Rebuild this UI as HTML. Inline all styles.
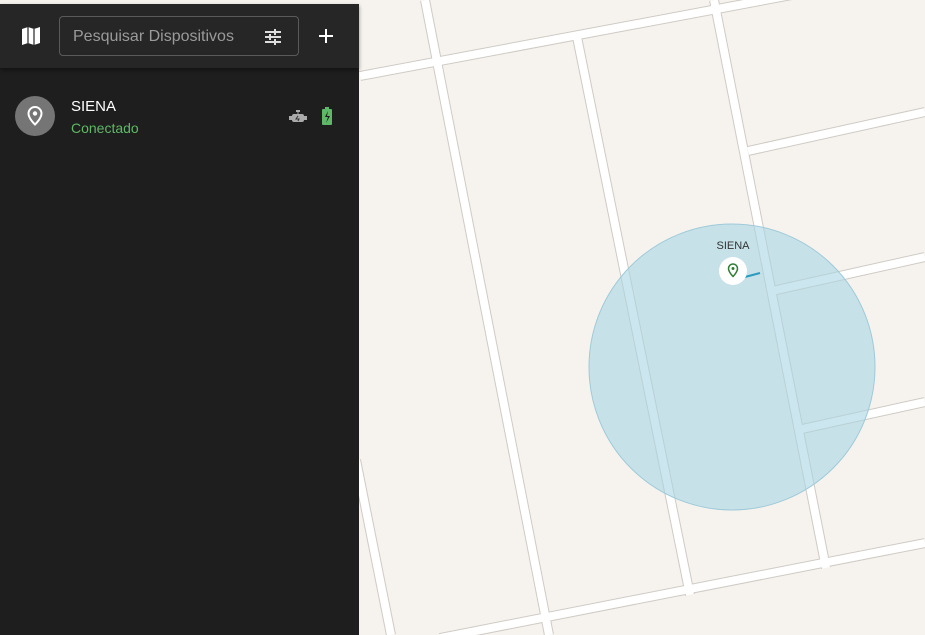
<!DOCTYPE html>
<html><head><meta charset="utf-8"><style>
body{margin:0;width:925px;height:635px;overflow:hidden;background:#f6f3ef;font-family:"Liberation Sans",sans-serif;position:relative}
svg.map{position:absolute;left:0;top:0}
.side{position:absolute;left:0;top:4px;width:359px;height:631px;background:#1e1e1e}
.hdr{height:64px;background:#262626;box-shadow:0 2px 4px rgba(0,0,0,.4);position:relative}
.search{position:absolute;left:59px;top:12px;width:240px;height:40px;border:1px solid #5a5a5a;border-radius:4px;box-sizing:border-box;color:#9a9a9a;font-size:16px;line-height:40px;padding-left:13px}
.av{position:absolute;left:15px;top:92px;width:40px;height:40px;border-radius:50%;background:#757575}
</style></head><body>
<svg class="map" width="925" height="635">
<g stroke="#cfcac4" stroke-width="10" stroke-linecap="butt">
<line x1="425" y1="0" x2="549" y2="635"/><line x1="576" y1="32" x2="690" y2="595"/><line x1="714" y1="0" x2="826" y2="568"/><line x1="356" y1="460" x2="391" y2="635"/>
<line x1="360" y1="76" x2="925" y2="-30"/><line x1="748" y1="151" x2="925" y2="112"/><line x1="772" y1="291" x2="925" y2="257"/><line x1="802" y1="429" x2="925" y2="402"/><line x1="440" y1="638" x2="925" y2="543"/>
</g>
<g stroke="#fff" stroke-width="8">
<line x1="425" y1="0" x2="549" y2="635"/><line x1="576" y1="32" x2="690" y2="595"/><line x1="714" y1="0" x2="826" y2="568"/><line x1="356" y1="460" x2="391" y2="635"/>
<line x1="360" y1="76" x2="925" y2="-30"/><line x1="748" y1="151" x2="925" y2="112"/><line x1="772" y1="291" x2="925" y2="257"/><line x1="802" y1="429" x2="925" y2="402"/><line x1="440" y1="638" x2="925" y2="543"/>
</g>
<circle cx="732" cy="367" r="143" fill="#a9d5e2" fill-opacity=".6" stroke="#9fcad8"/>
<line x1="745" y1="277" x2="760" y2="273" stroke="#2a9bc0" stroke-width="2"/>
<text x="733" y="249" font-size="11" text-anchor="middle" fill="#333" font-family="Liberation Sans">SIENA</text>
<circle cx="733" cy="271" r="14" fill="#fff"/>
<path d="M733 264a4.5 4.5 0 0 1 4.5 4.5c0 3.5-4.5 8-4.5 8s-4.5-4.5-4.5-8a4.5 4.5 0 0 1 4.5-4.5z" fill="none" stroke="#2e7d32" stroke-width="1.5"/><circle cx="733" cy="268.5" r="1.5" fill="#2e7d32"/>
</svg>
<div class="side">
<div class="hdr">
<svg style="position:absolute;left:21px;top:22px" width="20" height="20" viewBox="0 0 20 20"><path d="M1 3l6-2 6 2 6-2v16l-6 2-6-2-6 2z" fill="#fff"/><path d="M7 1v16M13 3v16" stroke="#262626" stroke-width="1.2"/></svg>
<div class="search">Pesquisar Dispositivos</div>
<svg style="position:absolute;left:264px;top:24px" width="18" height="18" viewBox="0 0 18 18" fill="#ddd"><rect x="1" y="3" width="16" height="2"/><rect x="1" y="8" width="16" height="2"/><rect x="1" y="13" width="16" height="2"/><rect x="10" y="1" width="2" height="6"/><rect x="5" y="6" width="2" height="6"/><rect x="10" y="11" width="2" height="6"/></svg>
<svg style="position:absolute;left:318px;top:24px" width="16" height="16"><path d="M8 1v14M1 8h14" stroke="#fff" stroke-width="2"/></svg>
</div>
<div class="av"></div>
<svg style="position:absolute;left:25px;top:101px" width="20" height="22" viewBox="0 0 20 22"><path d="M10 2a6.5 6.5 0 0 1 6.5 6.5c0 5-6.5 11-6.5 11s-6.5-6-6.5-11A6.5 6.5 0 0 1 10 2z" fill="none" stroke="#fff" stroke-width="2"/><circle cx="10" cy="8.5" r="2.2" fill="#fff"/></svg>
<div style="position:absolute;left:71px;top:94px;color:#fff;font-size:15px">SIENA</div>
<div style="position:absolute;left:71px;top:116px;color:#5fb865;font-size:14px">Conectado</div>
<svg style="position:absolute;left:289px;top:105px" width="18" height="16" viewBox="0 0 18 16"><rect x="3" y="5" width="12" height="8" rx="2" fill="#aaa"/><rect x="7" y="1" width="4" height="2" fill="#aaa"/><rect x="8.5" y="2" width="1" height="3" fill="#aaa"/><rect x="0" y="7" width="3" height="4" fill="#aaa"/><rect x="15" y="7" width="3" height="4" fill="#aaa"/><path d="M9 7l-2 3h3l-1 2" stroke="#333" fill="none"/></svg>
<svg style="position:absolute;left:321px;top:103px" width="12" height="19" viewBox="0 0 12 19"><rect x="4" y="0" width="4" height="2" fill="#5fb865"/><rect x="1" y="2" width="10" height="16" rx="1" fill="#5fb865"/><path d="M7 4l-3 6h3l-2 6 4-7H6z" fill="#1e1e1e"/></svg>
</div>
</body></html>
